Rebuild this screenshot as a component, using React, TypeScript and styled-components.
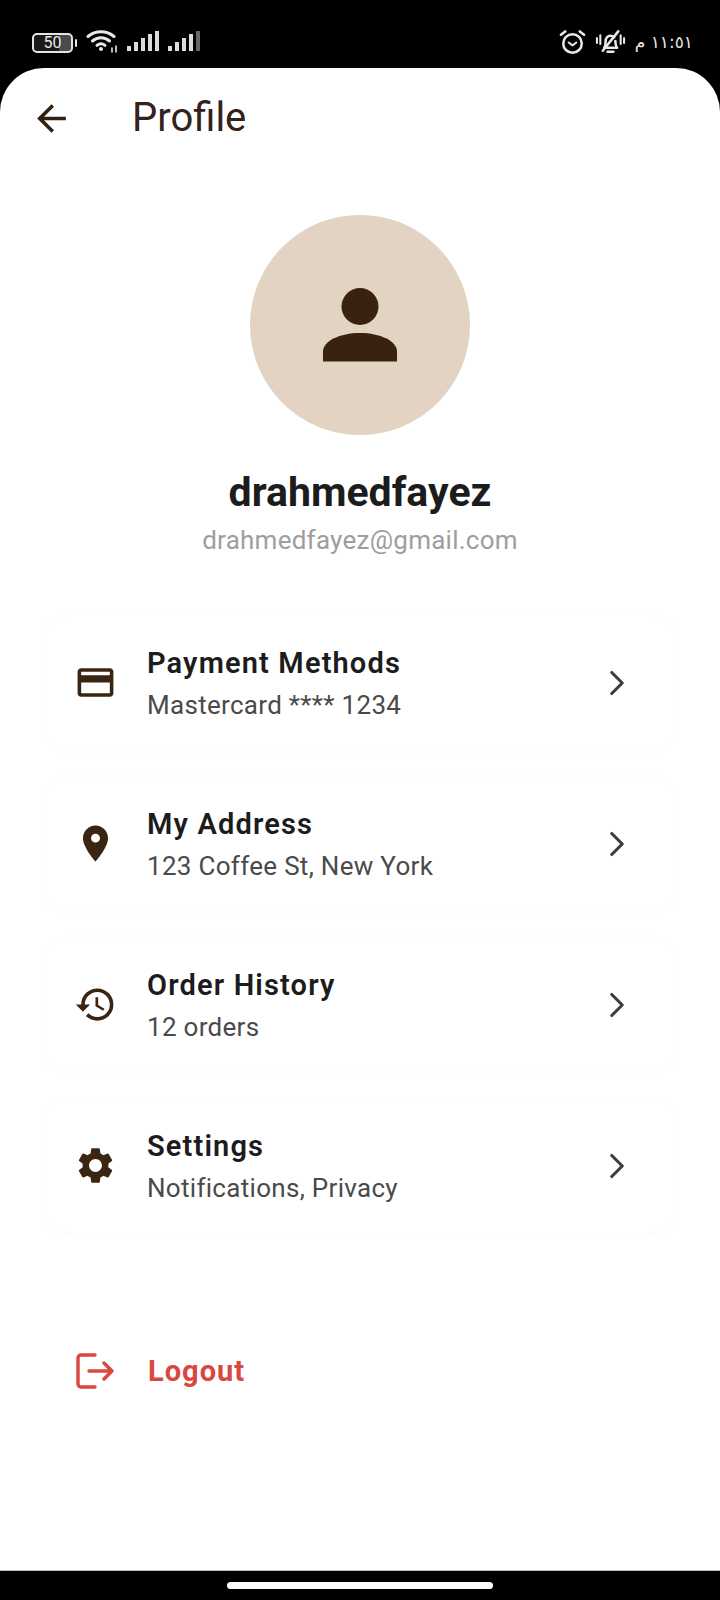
import React from "react";
import styled, { createGlobalStyle } from "styled-components";
import { ChevronRight } from "lucide-react";
import {
  MdArrowBack,
  MdCreditCard,
  MdHistory,
  MdLocationOn,
  MdSettings,
} from "react-icons/md";

const Global = createGlobalStyle`
  html, body { margin: 0; padding: 0; background: #000; }
  body { font-family: Roboto, "Liberation Sans", sans-serif; }
  * { box-sizing: border-box; }
`;

const Phone = styled.div`
  width: 720px;
  height: 1600px;
  display: flex;
  flex-direction: column;
  background: #000;
`;

const StatusBar = styled.div`
  height: 68px;
  flex: none;
  display: flex;
  justify-content: space-between;
  align-items: flex-start;
  padding: 29px 27px 0 32px;
  color: #e9e9e9;
`;

const StatusGroup = styled.div`
  display: flex;
  align-items: center;
  gap: 9px;
`;

const BatteryBox = styled.div`
  width: 41px;
  height: 20px;
  margin-top: 4px;
  border: 2px solid #e4e4e4;
  border-radius: 5px;
  position: relative;
  display: flex;
  align-items: center;
  justify-content: center;
  font-size: 16px;
  line-height: 1;
  color: #e9e9e9;
  background: linear-gradient(90deg, #1a1a1a 68%, #4a4a4a 68%);
  &::after {
    content: "";
    position: absolute;
    right: -6px;
    top: 4px;
    width: 2px;
    height: 8px;
    background: #e4e4e4;
    border-radius: 1px;
  }
`;

const BatteryWrap = styled.div`
  margin-right: 4px;
`;

const ClockCluster = styled.div`
  display: flex;
  align-items: center;
  gap: 9px;
`;

const Clock = styled.span`
  font-family: "DejaVu Sans", sans-serif;
  font-size: 17px;
  line-height: 24px;
  color: #e4e4e4;
  direction: rtl;
  white-space: nowrap;
`;

const Screen = styled.main`
  flex: 1;
  background: #fff;
  border-radius: 44px 44px 0 0;
  display: flex;
  flex-direction: column;
`;

const Header = styled.header`
  height: 100px;
  flex: none;
  display: flex;
  align-items: center;
  gap: 59px;
  padding: 0 0 0 30px;
  color: #33200f;
`;

const BackIcon = styled(MdArrowBack)`
  flex: none;
`;

const PageTitle = styled.h1`
  margin: 0;
  font-size: 40px;
  font-weight: 400;
  line-height: 1;
  color: #33211a;
`;

const ProfileBlock = styled.section`
  display: flex;
  flex-direction: column;
  align-items: center;
  padding-top: 47px;
`;

const Avatar = styled.div`
  width: 220px;
  height: 220px;
  border-radius: 50%;
  background: #e3d3c2;
  display: flex;
  align-items: center;
  justify-content: center;
`;

const UserName = styled.h2`
  margin: 35px 0 0;
  font-size: 41px;
  line-height: 44px;
  font-weight: 700;
  color: #1c1c1c;
`;

const UserEmail = styled.div`
  margin-top: 12px;
  font-size: 26px;
  line-height: 28px;
  letter-spacing: 0.25px;
  color: #9e9e9e;
`;

const Menu = styled.nav`
  display: flex;
  flex-direction: column;
  gap: 28px;
  padding: 62px 44px 0;
`;

const Card = styled.div`
  height: 133px;
  border-radius: 24px;
  background: #fff;
  box-shadow: 0 1px 10px rgba(0, 0, 0, 0.018);
  display: flex;
  align-items: center;
  padding: 0 38px 0 30px;
  color: #3a2412;
`;

const CardIcon = styled.div`
  width: 43px;
  height: 43px;
  flex: none;
  font-size: 43px;
  line-height: 0;
  margin-right: 30px;
`;

const CardText = styled.div`
  flex: 1;
  display: flex;
  flex-direction: column;
  gap: 13px;
  padding-top: 2px;
`;

const CardTitle = styled.div`
  font-size: 29px;
  line-height: 30px;
  font-weight: 600;
  letter-spacing: 1.15px;
  color: #1c1c1c;
`;

const CardSub = styled.div`
  font-size: 26px;
  line-height: 28px;
  letter-spacing: 0.3px;
  color: #4a4a4a;
`;

const Chevron = styled(ChevronRight)`
  flex: none;
  color: #3d3d3d;
`;

const LogoutRow = styled.button`
  border: 0;
  background: none;
  font-family: inherit;
  display: flex;
  align-items: center;
  gap: 34px;
  margin-top: 119px;
  padding: 0 0 0 76px;
  font-size: 29px;
  line-height: 40px;
  font-weight: 700;
  letter-spacing: 1px;
  color: #d9473f;
  text-align: left;
`;

const NavBar = styled.div`
  height: 30px;
  flex: none;
  border-top: 1px solid #bdbdbd;
  display: flex;
  justify-content: center;
  padding-top: 11px;
`;

const HomePill = styled.div`
  width: 266px;
  height: 7px;
  border-radius: 4px;
  background: #fff;
`;

const SignalBars = ({ lastDim }: { lastDim?: boolean }) => (
  <svg width="32" height="22" viewBox="0 0 32 22">
    <rect x="0" y="16" width="4" height="5" fill="#dcdcdc" />
    <rect x="7" y="12" width="4" height="9" fill="#dcdcdc" />
    <rect x="14" y="8" width="4" height="13" fill="#dcdcdc" />
    <rect x="21" y="4" width="4" height="17" fill="#dcdcdc" />
    <rect x="28" y="1" width="4" height="20" fill={lastDim ? "#666" : "#dcdcdc"} />
  </svg>
);

const WifiGlyph = () => (
  <svg width="32" height="24" viewBox="0 0 32 24" fill="none" stroke="#e9e9e9" strokeWidth="3" strokeLinecap="round">
    <path d="M2 7.500C9.500 1.200 20.500 1.200 28 7.500" />
    <path d="M6.500 12C11.500 7.800 18.500 7.800 23.500 12" />
    <path d="M11 16.300C13.500 14.300 16.500 14.300 19 16.300" />
    <circle cx="15" cy="20" r="2" fill="#e9e9e9" stroke="none" />
    <path d="M26 19v4M30 17v6" strokeWidth="1.600" />
  </svg>
);

const AlarmGlyph = () => (
  <svg width="27" height="26" viewBox="0 0 28 26" fill="none" stroke="#e9e9e9" strokeWidth="2.600" strokeLinecap="round" strokeLinejoin="round">
    <circle cx="14" cy="14.500" r="9.600" />
    <path d="M2 5.500 6.500 2M26 5.500 21.500 2" />
    <path d="M10 13.500l4 3 4-3" strokeWidth="2" />
  </svg>
);

const MutedBellGlyph = () => (
  <svg width="31" height="26" viewBox="0 0 32 26" fill="none" stroke="#e9e9e9" strokeWidth="2.600" strokeLinecap="round" strokeLinejoin="round">
    <path d="M2 9v5M5.500 6v9M30 9v5M26.500 6v9" strokeWidth="2.100" />
    <path d="M9.500 19c1.300-2 1.500-4 1.500-7 0-3 2-5.500 5-5.500 1.500 0 2.800.6 3.700 1.600" />
    <path d="M21 12c0 3 .3 5 1.800 7H12" />
    <path d="M13 23h6" />
    <path d="M8 22 24 2" />
  </svg>
);

const AvatarGlyph = () => (
  <svg width="74" height="74" viewBox="0 0 74 74" fill="#3a2210">
    <circle cx="37" cy="18.500" r="18.500" />
    <path d="M0 73.500v-10C0 53 17 45 37 45s37 8 37 18.500v10Z" />
  </svg>
);

const LogoutGlyph = () => (
  <svg width="38" height="36" viewBox="0 0 38 36" fill="none" stroke="#d9473f" strokeWidth="3.400" strokeLinecap="round" strokeLinejoin="round">
    <path d="M19 2H5a3 3 0 0 0-3 3v26a3 3 0 0 0 3 3h14" />
    <path d="M13 18h23M28 10l8 8-8 8" />
  </svg>
);

const items = [
  { icon: <MdCreditCard />, title: "Payment Methods", sub: "Mastercard **** 1234" },
  { icon: <MdLocationOn />, title: "My Address", sub: "123 Coffee St, New York" },
  { icon: <MdHistory />, title: "Order History", sub: "12 orders" },
  { icon: <MdSettings />, title: "Settings", sub: "Notifications, Privacy" },
];

export default function App() {
  return (
    <Phone>
      <Global />
      <StatusBar>
        <StatusGroup>
          <BatteryWrap>
            <BatteryBox>50</BatteryBox>
          </BatteryWrap>
          <WifiGlyph />
          <SignalBars />
          <SignalBars lastDim />
        </StatusGroup>
        <ClockCluster>
          <AlarmGlyph />
          <MutedBellGlyph />
          <Clock>١١:٥١ م</Clock>
        </ClockCluster>
      </StatusBar>
      <Screen>
        <Header>
          <BackIcon size={43} />
          <PageTitle>Profile</PageTitle>
        </Header>
        <ProfileBlock>
          <Avatar>
            <AvatarGlyph />
          </Avatar>
          <UserName>drahmedfayez</UserName>
          <UserEmail>drahmedfayez@gmail.com</UserEmail>
        </ProfileBlock>
        <Menu>
          {items.map((item) => (
            <Card key={item.title}>
              <CardIcon>{item.icon}</CardIcon>
              <CardText>
                <CardTitle>{item.title}</CardTitle>
                <CardSub>{item.sub}</CardSub>
              </CardText>
              <Chevron size={42} strokeWidth={1.8} />
            </Card>
          ))}
        </Menu>
        <LogoutRow>
          <LogoutGlyph />
          Logout
        </LogoutRow>
      </Screen>
      <NavBar>
        <HomePill />
      </NavBar>
    </Phone>
  );
}
